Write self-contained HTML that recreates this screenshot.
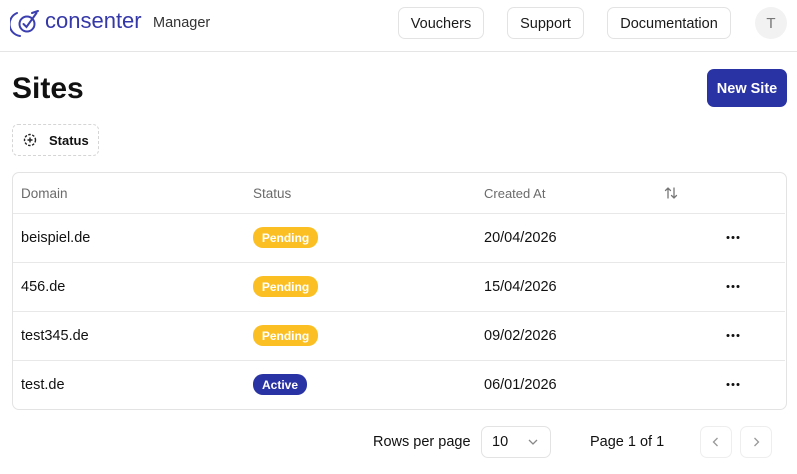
<!DOCTYPE html>
<html><head><meta charset="utf-8"><style>
*{box-sizing:border-box;margin:0;padding:0}
body{width:797px;height:474px;overflow:hidden;background:#fff;font-family:"Liberation Sans",sans-serif;color:#111;position:relative}
.a{position:absolute}
.hdr{left:0;top:0;width:797px;height:52px;border-bottom:1px solid #e5e5e5}
.nb{border:1px solid #e3e3e3;border-radius:7px;font-size:14.5px;display:flex;align-items:center;justify-content:center;top:7px;height:32px;color:#1a1a1a;padding-top:1px}
.th{font-size:13.5px;color:#6b6b6b;top:185px}
.row{left:13px;width:772px;height:1px;background:#e8e8e8}
.td{font-size:14.5px;color:#111}
.badge{font-size:12px;font-weight:bold;color:#fff;border-radius:10px;height:21px;display:flex;align-items:center;justify-content:center;left:253px}
.dots{left:726px}
</style></head><body>
<div class="a hdr"></div>
<svg class="a" style="left:10px;top:7px" width="34" height="32" viewBox="0 0 34 32" fill="none" stroke="#3b3fb0" stroke-width="2" stroke-linecap="round">
<path d="M7 6 A12 12 0 0 0 10 29"/><circle cx="17" cy="17" r="7.5"/><path d="M13.5 17 l3 3 l10 -14"/><path d="M22 6 l6 -2"/>
</svg>
<div class="a" style="left:45px;top:8px;font-size:22px;color:#3538a8">consenter</div>
<div class="a" style="left:153px;top:15px;font-size:14.5px;color:#333">Manager</div>
<div class="a nb" style="left:398px;width:86px">Vouchers</div>
<div class="a nb" style="left:507px;width:77px">Support</div>
<div class="a nb" style="left:607px;width:124px">Documentation</div>
<div class="a" style="left:755px;top:7px;width:32px;height:32px;border-radius:50%;background:#f2f2f2;color:#777;font-size:15px;display:flex;align-items:center;justify-content:center">T</div>
<div class="a" style="left:12px;top:72px;font-size:30px;font-weight:bold">Sites</div>
<div class="a" style="left:707px;top:69px;width:80px;height:38px;background:#2a33a3;border-radius:7px;color:#fff;font-size:14.5px;font-weight:bold;display:flex;align-items:center;justify-content:center;padding-top:2px">New Site</div>
<div class="a" style="left:12px;top:124px;width:87px;height:32px;border:1px dashed #d5d5d5;border-radius:6px"></div>
<svg class="a" style="left:23px;top:133px" width="14" height="14" viewBox="0 0 14 14" fill="none" stroke="#222" stroke-width="1.4"><circle cx="7" cy="7" r="5.5" stroke-dasharray="2.5 1.5"/><path d="M7 4.5v5M4.5 7h5"/></svg>
<div class="a" style="left:49px;top:133px;font-size:13px;font-weight:bold">Status</div>
<div class="a" style="left:12px;top:172px;width:775px;height:238px;border:1px solid #e3e3e3;border-radius:7px"></div>
<div class="a th" style="left:21px;top:186px">Domain</div>
<div class="a th" style="left:253px;top:186px">Status</div>
<div class="a th" style="left:484px;top:186px;font-size:13px">Created At</div>
<svg class="a" style="left:664px;top:186px" width="14" height="14" viewBox="0 0 14 14" fill="none" stroke="#777" stroke-width="1.3" stroke-linecap="round"><path d="M4 12V2M1.5 4.5L4 2l2.5 2.5M10 2v10M7.5 9.5L10 12l2.5-2.5"/></svg>
<div class="a row" style="top:213px"></div>
<div class="a row" style="top:262px"></div>
<div class="a row" style="top:311px"></div>
<div class="a row" style="top:360px"></div>
<div class="a td" style="left:21px;top:230px">beispiel.de</div>
<div class="a badge" style="top:227px;width:65px;background:#fbbf24">Pending</div>
<div class="a td" style="left:484px;top:230px">20/04/2026</div>
<div class="a td" style="left:21px;top:279px">456.de</div>
<div class="a badge" style="top:276px;width:65px;background:#fbbf24">Pending</div>
<div class="a td" style="left:484px;top:279px">15/04/2026</div>
<div class="a td" style="left:21px;top:328px">test345.de</div>
<div class="a badge" style="top:325px;width:65px;background:#fbbf24">Pending</div>
<div class="a td" style="left:484px;top:328px">09/02/2026</div>
<div class="a td" style="left:21px;top:377px">test.de</div>
<div class="a badge" style="top:374px;width:54px;background:#2a33a3">Active</div>
<div class="a td" style="left:484px;top:377px">06/01/2026</div>
<svg class="a" style="left:725px;top:0" width="16" height="400" fill="#111"><g id="d"><circle cx="3" cy="237.5" r="1.5"/><circle cx="8" cy="237.5" r="1.5"/><circle cx="13" cy="237.5" r="1.5"/></g><use href="#d" y="49"/><use href="#d" y="98"/><use href="#d" y="147"/></svg>
<div class="a td" style="left:373px;top:434px">Rows per page</div>
<div class="a" style="left:481px;top:426px;width:70px;height:32px;border:1px solid #e3e3e3;border-radius:7px"></div>
<div class="a td" style="left:492px;top:434px">10</div>
<svg class="a" style="left:527px;top:437px" width="12" height="10" viewBox="0 0 12 10" fill="none" stroke="#888" stroke-width="1.3"><path d="M2 3l4 4 4-4"/></svg>
<div class="a td" style="left:590px;top:434px">Page 1 of 1</div>
<div class="a" style="left:700px;top:426px;width:32px;height:32px;border:1px solid #eee;border-radius:7px"></div>
<div class="a" style="left:740px;top:426px;width:32px;height:32px;border:1px solid #eee;border-radius:7px"></div>
<svg class="a" style="left:710px;top:436px" width="12" height="12" viewBox="0 0 12 12" fill="none" stroke="#999" stroke-width="1.3"><path d="M7.5 2l-4 4 4 4"/></svg>
<svg class="a" style="left:750px;top:436px" width="12" height="12" viewBox="0 0 12 12" fill="none" stroke="#999" stroke-width="1.3"><path d="M4.5 2l4 4-4 4"/></svg>
</body></html>
